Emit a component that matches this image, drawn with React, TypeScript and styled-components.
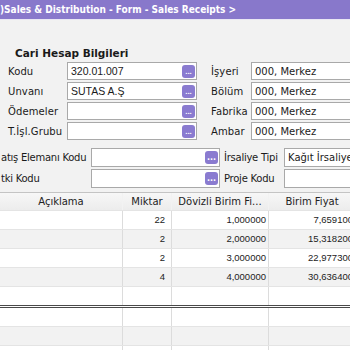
import { Fragment } from 'react'
import styled, { createGlobalStyle } from 'styled-components'

const GlobalStyle = createGlobalStyle`
  html, body {
    margin: 0;
    padding: 0;
    background: #f2f2f2;
    overflow: hidden;
  }
`

const Page = styled.div`
  width: 350px;
  height: 350px;
  overflow: hidden;
  background: #f2f2f2;
  font-family: "DejaVu Sans", Verdana, sans-serif;
  color: #1a1a1a;
`

const TitleBar = styled.div`
  height: 19px;
  line-height: 19px;
  background: #8878cb;
  color: #fff;
  font-family: "DejaVu Sans Condensed", "DejaVu Sans", sans-serif;
  font-weight: bold;
  font-size: 10px;
  white-space: nowrap;
  border-bottom: 1px solid #e9e7f3;
`

const Heading = styled.div`
  margin: 26px 0 2px 15px;
  font-weight: bold;
  font-size: 10.5px;
  line-height: 14px;
`

const FormGrid = styled.div<{ $cols: string; $row: number; $pad: number }>`
  display: grid;
  grid-template-columns: ${p => p.$cols};
  grid-auto-rows: ${p => p.$row}px;
  row-gap: 2px;
  padding-left: ${p => p.$pad}px;
  align-items: center;
  white-space: nowrap;
`

const Label = styled.div<{ $tight?: boolean }>`
  font-size: 10px;
  letter-spacing: ${p => (p.$tight ? '-0.25px' : '0.1px')};
`

const Field = styled.div<{ $mono?: boolean }>`
  height: 100%;
  box-sizing: border-box;
  border: 1px solid #a9a9a9;
  background: #fff;
  display: flex;
  align-items: center;
  justify-content: space-between;
  padding: 0 1px 0 3px;
  font-family: ${p => (p.$mono ? '"Liberation Sans", Arial, sans-serif' : '"DejaVu Sans", Verdana, sans-serif')};
  font-size: ${p => (p.$mono ? '10.5px' : '10px')};
  overflow: hidden;
`

const DotButton = styled.span`
  width: 13px;
  height: 13px;
  border-radius: 3px;
  background: #8a7bd0;
  color: #fff;
  font-size: 8px;
  font-weight: bold;
  line-height: 13px;
  text-align: center;
  flex-shrink: 0;
`

const Gap = styled.div``

const Spacer = styled.div`
  height: 8px;
`

const Table = styled.div`
  margin-top: 4px;
  border-top: 1px solid #c4c4c4;
  width: 356px;
`

const Row = styled.div<{ $alt?: boolean; $head?: boolean; $double?: boolean }>`
  display: grid;
  grid-template-columns: 123px 49px 97px 87px;
  height: ${p => (p.$head ? 17 : 18)}px;
  background: ${p => (p.$head ? 'linear-gradient(#f7f7f7, #ececec)' : p.$alt ? '#f2f2f2' : '#fff')};
  border-bottom: ${p => (p.$double ? '3px double #4a4a4a' : '1px solid #e4e4e4')};
`

const Cell = styled.div<{ $head?: boolean; $pad?: number }>`
  border-right: 1px solid ${p => (p.$head ? '#f2f2f2' : '#dcdcdc')};
  font-family: ${p => (p.$head ? '"DejaVu Sans", Verdana, sans-serif' : '"Liberation Sans", Arial, sans-serif')};
  font-size: ${p => (p.$head ? '10px' : '9.5px')};
  color: #222;
  text-align: ${p => (p.$head ? 'center' : 'right')};
  padding-right: ${p => p.$pad ?? 0}px;
  line-height: ${p => (p.$head ? 17 : 18)}px;
  white-space: nowrap;
  overflow: hidden;
`

const left = [
  ['Kodu', '320.01.007'],
  ['Unvanı', 'SUTAS A.Ş'],
  ['Ödemeler', ''],
  ['T.İşl.Grubu', ''],
]
const right = [
  ['İşyeri', '000, Merkez'],
  ['Bölüm', '000, Merkez'],
  ['Fabrika', '000, Merkez'],
  ['Ambar', '000, Merkez'],
]

const rows = [
  ['22', '1,000000', '7,659100'],
  ['2', '2,000000', '15,318200'],
  ['2', '3,000000', '22,977300'],
  ['4', '4,000000', '30,636400'],
]

function EmptyRow({ alt, double }: { alt?: boolean; double?: boolean }) {
  return (
    <Row $alt={alt} $double={double}>
      <Cell />
      <Cell />
      <Cell />
      <Cell />
    </Row>
  )
}

export default function App() {
  return (
    <Page>
      <GlobalStyle />
      <TitleBar>)Sales &amp; Distribution - Form - Sales Receipts &gt;</TitleBar>
      <Heading>Cari Hesap Bilgileri</Heading>
      <FormGrid $cols="59px 130px 14px 40px 120px" $row={18} $pad={8}>
        {left.map((l, i) => (
          <Fragment key={i}>
            <Label>{l[0]}</Label>
            <Field $mono>
              <span>{l[1]}</span>
              <DotButton>...</DotButton>
            </Field>
            <Gap />
            <Label>{right[i][0]}</Label>
            <Field>{right[i][1]}</Field>
          </Fragment>
        ))}
      </FormGrid>
      <Spacer />
      <FormGrid $cols="90px 129px 4px 60px 80px" $row={19} $pad={1}>
        <Label $tight>atış Elemanı Kodu</Label>
        <Field>
          <span />
          <DotButton>...</DotButton>
        </Field>
        <Gap />
        <Label $tight>İrsaliye Tipi</Label>
        <Field>Kağıt İrsaliye</Field>
        <Label $tight>tki Kodu</Label>
        <Field>
          <span />
          <DotButton>...</DotButton>
        </Field>
        <Gap />
        <Label $tight>Proje Kodu</Label>
        <Field />
      </FormGrid>
      <Table>
        <Row $head>
          <Cell $head>Açıklama</Cell>
          <Cell $head>Miktar</Cell>
          <Cell $head>Dövizli Birim Fi...</Cell>
          <Cell $head>Birim Fiyat</Cell>
        </Row>
        {rows.map((r, i) => (
          <Row key={i} $alt={i % 2 === 1}>
            <Cell />
            <Cell $pad={6}>{r[0]}</Cell>
            <Cell $pad={2}>{r[1]}</Cell>
            <Cell $pad={2}>{r[2]}</Cell>
          </Row>
        ))}
        <EmptyRow double />
        <EmptyRow />
        <EmptyRow alt />
        <EmptyRow />
      </Table>
    </Page>
  )
}
